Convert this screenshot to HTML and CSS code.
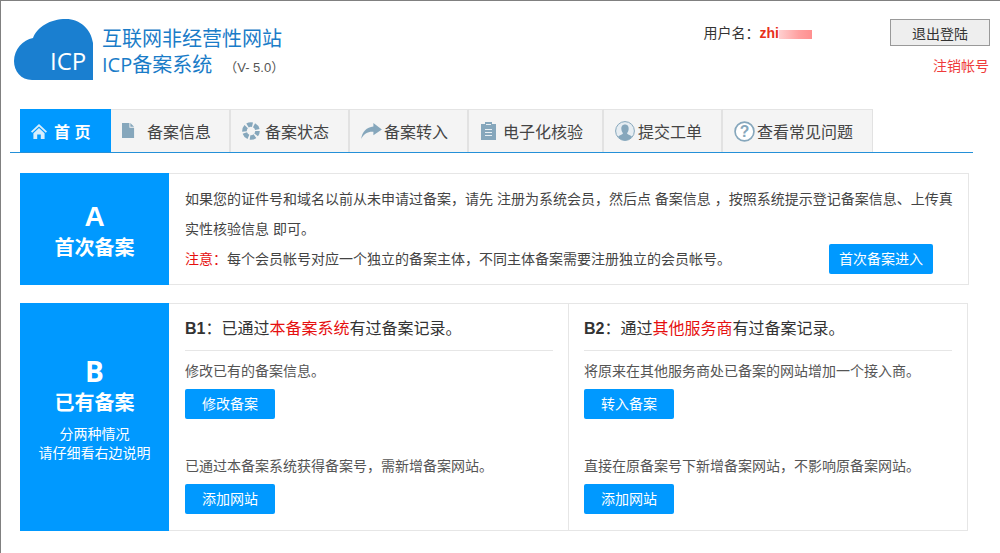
FILE: index.html
```html
<!DOCTYPE html>
<html lang="zh-CN">
<head>
<meta charset="utf-8">
<title>ICP备案系统</title>
<link rel="stylesheet" href="styles.css">
</head>
<body>
<div class="page">
  <header class="header">
    <div class="brand">
      <svg class="logo" viewBox="0 0 80 62" width="80" height="62" aria-hidden="true">
        <path fill="#1a7fd0" d="M79 61 H18 C7 61 0 52 0 42 C0 30 9 21 19 19 C23 8 36 0 52 0 C66 0 77 10 79 24 Z"/>
        <text x="36" y="51" class="logo-text">ICP</text>
      </svg>
      <div class="brand-text">
        <div class="brand-line">互联网非经营性网站</div>
        <div class="brand-line"><span class="brand-latin">ICP</span>备案系统<span class="version">（V- 5.0）</span></div>
      </div>
    </div>
    <div class="user-area">
      <div class="user">用户名：<b class="user-name">zhi<span class="blur"></span></b></div>
      <div class="account">
        <button class="logout" type="button">退出登陆</button>
        <a class="cancel">注销帐号</a>
      </div>
    </div>
  </header>

  <nav class="nav">
    <a class="tab tab-home">
      <svg class="ic-home" viewBox="0 0 16 16" width="16" height="16"><path fill="#d8eefc" d="M8 1 L16 8.6 L14.8 9.8 L8 3.4 L1.2 9.8 L0 8.6 Z M8 5 L13.6 10.2 V16 H9.8 V11.4 H6.2 V16 H2.4 V10.2 Z"/></svg>
      <span class="spaced">首 页</span>
    </a>
    <a class="tab tab-w120">
      <svg class="icon gap-doc" viewBox="0 0 14 17" width="13" height="16"><path fill="#86a7bc" d="M0 0 H8 V5 H13 V16 H0 Z M9 0 L13 4 H9 Z"/></svg>
      备案信息
    </a>
    <a class="tab tab-w119">
      <svg class="icon gap-5" viewBox="0 0 18 18" width="18" height="18"><circle cx="9" cy="9" r="6.5" fill="none" stroke="#86a7bc" stroke-width="4.6" stroke-dasharray="5.2 1.6" stroke-dashoffset="1"/></svg>
      备案状态
    </a>
    <a class="tab tab-w119">
      <svg class="icon gap-2" viewBox="0 0 22 17" width="21" height="16"><path fill="#86a7bc" d="M13 0 L22 7 L13 13 V9.4 C7 9 3 11.5 0 17 C1 9.5 6 4.4 13 3.8 Z"/></svg>
      备案转入
    </a>
    <a class="tab tab-w135">
      <svg class="icon gap-7" viewBox="0 0 15 18" width="15" height="18"><path fill="#86a7bc" d="M0 2 H4 V0 H11 V2 H15 V18 H0 Z"/><path stroke="#e8eff4" stroke-width="1" d="M4 7.5 H11 M4 10.5 H11 M4 13.5 H11 M5 2.5 H10"/></svg>
      电子化核验
    </a>
    <a class="tab tab-w119">
      <svg class="icon gap-3" viewBox="0 0 20 20" width="20" height="20"><circle cx="10" cy="10" r="9.4" fill="#e6edf2" stroke="#86a7bc" stroke-width="1"/><path fill="#86a7bc" d="M10 3.5 C12.8 3.5 14 5.8 13.6 8.4 C13.4 10 12.6 11.4 12 12.2 C12 13.4 15 14.2 17 15.4 C15.4 18 13 19.4 10 19.4 C7 19.4 4.6 18 3 15.4 C5 14.2 8 13.4 8 12.2 C7.4 11.4 6.6 10 6.4 8.4 C6 5.8 7.2 3.5 10 3.5 Z"/></svg>
      提交工单
    </a>
    <a class="tab tab-w150">
      <svg class="icon gap-2" viewBox="0 0 20 20" width="21" height="21"><circle cx="10" cy="10" r="9" fill="#fff" stroke="#86a7bc" stroke-width="1.6"/><text x="10" y="15" class="q-mark">?</text></svg>
      查看常见问题
    </a>
  </nav>

  <section class="card card-a">
    <div class="side side-a">
      <div class="side-letter">A</div>
      <div class="side-title">首次备案</div>
    </div>
    <div class="a-body">
      <p class="a-line">如果您的证件号和域名以前从未申请过备案，请先 注册为系统会员，然后点 备案信息 ，按照系统提示登记备案信息、上传真实性核验信息 即可。</p>
      <div class="a-note">
        <p class="a-line"><span class="red">注意：</span>每个会员帐号对应一个独立的备案主体，不同主体备案需要注册独立的会员帐号。</p>
        <a class="btn btn-wide">首次备案进入</a>
      </div>
    </div>
  </section>

  <section class="card card-b">
    <div class="side side-b">
      <div class="side-letter letter-b">B</div>
      <div class="side-title">已有备案</div>
      <div class="side-sub">分两种情况<br>请仔细看右边说明</div>
    </div>
    <div class="col">
      <h3 class="col-title"><b class="latin">B1</b>：已通过<span class="red">本备案系统</span>有过备案记录。</h3>
      <p class="col-text">修改已有的备案信息。</p>
      <a class="btn">修改备案</a>
      <p class="col-text second">已通过本备案系统获得备案号，需新增备案网站。</p>
      <a class="btn">添加网站</a>
    </div>
    <div class="col col-right">
      <h3 class="col-title"><b class="latin">B2</b>：通过<span class="red">其他服务商</span>有过备案记录。</h3>
      <p class="col-text">将原来在其他服务商处已备案的网站增加一个接入商。</p>
      <a class="btn">转入备案</a>
      <p class="col-text second">直接在原备案号下新增备案网站，不影响原备案网站。</p>
      <a class="btn">添加网站</a>
    </div>
  </section>
</div>
</body>
</html>
```

FILE: styles.css
```css
* { box-sizing: border-box; }
html, body { margin: 0; padding: 0; height: 100%; overflow: hidden; background: #fff; }
body {
  font-family: "Liberation Sans", "Noto Sans CJK SC", sans-serif;
  font-size: 14px;
  color: #333;
}
.page {
  width: 1000px;
  height: 553px;
  border-top: 1px solid #808080;
  border-left: 1px solid #808080;
}
.header {
  display: flex;
  justify-content: space-between;
  height: 108px;
  padding: 18px 10px 0 13px;
}
.brand { display: flex; align-items: flex-start; }
.logo { display: block; flex: none; }
.logo-text { fill: #fff; font-family: "Open Sans", sans-serif; font-size: 24px; }
.brand-text { margin: 7px 0 0 8px; color: #1a7cc8; font-size: 20px; line-height: 26px; }
.brand-line { height: 26px; white-space: nowrap; }
.brand-latin { font-family: "Open Sans", sans-serif; }
.version { color: #555; font-size: 13px; margin-left: 12px; }
.user-area { display: flex; }
.user { margin: 6px 78px 0 0; line-height: 16px; height: 16px; color: #333; white-space: nowrap; }
.user-name { color: #e8301c; font-weight: 700; font-size: 14px; }
.blur {
  display: inline-block;
  width: 33px;
  height: 9px;
  vertical-align: -1px;
  background: linear-gradient(90deg, #ffd0d0, #ffa0a0 60%, #ff9090);
}
.account { display: flex; flex-direction: column; align-items: flex-end; width: 100px; }
.logout {
  display: block;
  width: 100px;
  height: 27px;
  padding: 0;
  font: inherit;
  color: #333;
  background: #eee;
  border: 1px solid #999;
}
.cancel { margin-top: 12px; color: #ef3b3b; line-height: 16px; padding-right: 1px; }

.nav {
  display: flex;
  height: 44px;
  margin-left: 9px;
  width: 963px;
  padding-left: 10px;
  border-bottom: 1px solid #2490d8;
}
.tab {
  display: flex;
  align-items: center;
  height: 43px;
  font-size: 16px;
  color: #444;
  background: #f4f4f4;
  border-top: 1px solid #e4e4e4;
  border-right: 2px solid #e2e2e2;
  white-space: nowrap;
}
.tab-home {
  width: 91px;
  padding-left: 11px;
  color: #fff;
  font-weight: 700;
  background: #0099ff;
  border: 0;
}
.tab-w120 { width: 120px; padding-left: 11px; }
.tab-w119 { width: 119px; padding-left: 11px; }
.tab-w135 { width: 135px; padding-left: 12px; }
.tab-w150 { width: 150px; padding-left: 11px; border-right-width: 1px; }
.spaced { margin-left: 7px; }
.ic-home { flex: none; }
.icon { flex: none; }
.gap-doc { margin-right: 12px; }
.gap-7 { margin-right: 7px; }
.gap-5 { margin-right: 5px; }
.gap-3 { margin-right: 3px; }
.gap-2 { margin-right: 2px; }
.q-mark { fill: #86a7bc; font-family: "Liberation Sans", sans-serif; font-size: 15px; font-weight: 700; text-anchor: middle; }

.card {
  display: flex;
  margin-left: 19px;
  border: 1px solid #e6e6e6;
  border-left: 0;
}
.card-a { width: 949px; height: 112px; margin-top: 20px; }
.card-b { width: 948px; height: 228px; margin-top: 18px; }
.side {
  flex: none;
  width: 149px;
  margin: -1px 0;
  display: flex;
  flex-direction: column;
  align-items: center;
  justify-content: center;
  color: #fff;
  background: #0099ff;
}
.side-a { padding-top: 2px; }
.side-b { padding-bottom: 17px; }
.side-letter { font-size: 28px; font-weight: 700; line-height: 35px; }
.letter-b { font-family: "Open Sans", sans-serif; }
.side-title { font-size: 20px; font-weight: 700; line-height: 28px; }
.side-sub { margin-top: 8px; font-size: 14px; line-height: 19px; text-align: center; }

.a-body { flex: 1; padding: 10px 15px 0 16px; }
.a-line { margin: 0; line-height: 30px; color: #444; }
.a-note { display: flex; justify-content: space-between; align-items: flex-start; }
.a-note .a-line { white-space: nowrap; }
.a-note .btn { margin: 0 20px 0 0; }
.red { color: #e60f0f; }
.btn {
  display: block;
  width: 90px;
  height: 30px;
  line-height: 30px;
  text-align: center;
  color: #fff;
  background: #0099ff;
  border-radius: 2px;
}
.btn-wide { width: 104px; }

.col { width: 399px; padding: 14px 15px 0 16px; }
.col-right { border-left: 1px solid #e6e6e6; padding-left: 15px; }
.col-title {
  margin: 0;
  height: 33px;
  line-height: 22px;
  font-size: 16px;
  font-weight: 400;
  color: #333;
  border-bottom: 1px solid #e6e6e6;
}
.latin { font-weight: 700; }
.col-text { margin: 10px 0 0; line-height: 20px; color: #555; }
.col .btn { margin-top: 8px; }
.col .second { margin-top: 37px; }
```
